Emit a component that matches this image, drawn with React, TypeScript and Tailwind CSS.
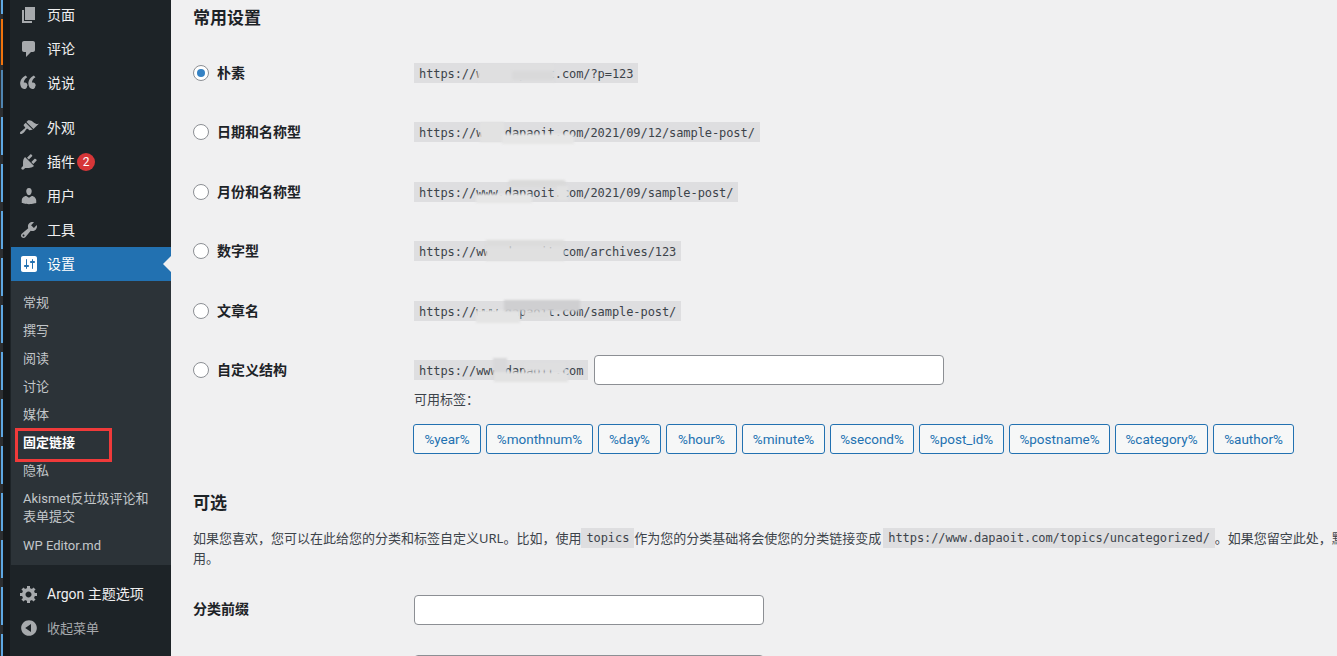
const font = "font-['Noto_Sans','Noto_Sans_CJK_SC',sans-serif]";
const latin = "font-['Roboto','Noto_Sans_CJK_SC',sans-serif]";
const mono = "font-['DejaVu_Sans_Mono','Noto_Sans_CJK_SC',monospace] text-[12px] tracking-[-0.08px]";

const strip = [
  "h-[14px] bg-[#5ea7e2]",
  "h-[5px] bg-[#2c2e30]",
  "h-[46px] bg-[#f0730c]",
  "h-[5px] bg-[#2c2e30]",
  "h-[38px] bg-[#4f84b0]",
  "h-[9px] bg-[#2c2e30]",
  "h-[38px] bg-[#5ea7e2]",
  "h-[9px] bg-[#2c2e30]",
  "h-[38px] bg-[#5ea7e2]",
  "h-[9px] bg-[#2c2e30]",
  "h-[38px] bg-[#5ea7e2]",
  "h-[9px] bg-[#2c2e30]",
  "h-[38px] bg-[#5ea7e2]",
  "h-[9px] bg-[#2c2e30]",
  "h-[38px] bg-[#5ea7e2]",
  "h-[9px] bg-[#2c2e30]",
  "h-[38px] bg-[#5ea7e2]",
  "h-[9px] bg-[#2c2e30]",
  "h-[38px] bg-[#5ea7e2]",
  "h-[9px] bg-[#2c2e30]",
  "h-[38px] bg-[#5ea7e2]",
  "h-[9px] bg-[#2c2e30]",
  "h-[38px] bg-[#5ea7e2]",
  "h-[9px] bg-[#2c2e30]",
  "h-[38px] bg-[#5ea7e2]",
  "h-[9px] bg-[#2c2e30]",
  "h-[38px] bg-[#5ea7e2]",
  "h-[9px] bg-[#2c2e30]",
  "h-[38px] bg-[#5ea7e2]",
  "h-[5px] bg-[#2c2e30]",
  "h-[18px] bg-[#5ea7e2]",
  "h-[8px] bg-[#2c2e30]",
];

// dashicons, 20x20 grid
const icons = {
  page: "M6 15V2h10v13H6zm-1 1h8v2H3V5h2v11z",
  comment: "M5 2h9c1.1 0 2 .9 2 2v7c0 1.1-.9 2-2 2h-2l-5 5v-5H5c-1.1 0-2-.9-2-2V4c0-1.1.9-2 2-2z",
  quote: "M8.54 12.74c0-.87-.24-1.61-.72-2.22-.73-.92-2.14-1.03-2.96-.85-.34-1.93 1.3-4.39 3.42-5.45L6.65 2.5C3.45 4.03.71 7.59 1.27 11.6 1.65 14.37 3.1 16 5.08 16c.88 0 1.61-.29 2.19-.86.58-.58.87-1.32.87-2.2zm8.19 0c0-.87-.24-1.61-.72-2.22-.73-.92-2.14-1.03-2.96-.85-.34-1.93 1.3-4.39 3.42-5.45L14.84 2.5c-3.2 1.53-5.94 5.09-5.38 9.1.38 2.77 1.83 4.4 3.81 4.4.88 0 1.61-.29 2.19-.86.58-.58.87-1.32.87-2.2z",
  brush: "M14.48 11.06L7.41 3.99l1.5-1.5c.5-.56 2.3-.47 3.51.32 1.21.8 1.43 1.28 2.91 2.1 1.18.64 2.45 1.26 4.45.85zm-.71.71L6.7 4.7 4.93 6.47c-.39.39-.39 1.02 0 1.41l1.06 1.06c.39.39.39 1.03 0 1.42-.6.6-1.43 1.11-2.21 1.69-.35.26-.7.53-1.01.84C1.43 13.23.4 14.96 1.2 15.8c.8.8 2.52-.22 3.87-1.57.31-.31.58-.66.84-1.01.58-.78 1.09-1.61 1.69-2.21.39-.39 1.03-.39 1.42 0l1.06 1.06c.39.39 1.02.39 1.41 0z",
  plug: "M13.11 4.36L9.87 7.6 8 5.73l3.24-3.24c.35-.34 1.05-.2 1.56.32.52.51.66 1.21.31 1.55zm-8 1.77l.91-1.12 9.01 9.01-1.19.84c-.71.71-2.63 1.16-3.82 1.16H6.14L4.9 17.26c-.59.59-1.54.59-2.12 0-.59-.58-.59-1.53 0-2.12l1.24-1.24v-3.88c0-1.13.4-3.19 1.09-3.89zm7.26 3.97l3.24-3.24c.34-.35 1.04-.21 1.55.31.52.51.66 1.21.31 1.55l-3.24 3.25z",
  user: "M10 9.25c-2.27 0-2.73-3.44-2.73-3.44C7 4.02 7.82 2 9.97 2c2.16 0 2.98 2.02 2.71 3.81 0 0-.41 3.44-2.68 3.44zm0 2.57L12.72 10c2.39 0 4.52 2.33 4.52 4.53v2.49s-3.65 1.13-7.24 1.13c-3.65 0-7.24-1.13-7.24-1.13v-2.49c0-2.25 1.94-4.48 4.47-4.48z",
  tool: "M16.68 9.77c-1.34 1.34-3.3 1.67-4.95.99l-5.41 6.52c-.99.99-2.59.99-3.58 0s-.99-2.59 0-3.57l6.52-5.42c-.68-1.65-.35-3.61.99-4.95 1.28-1.28 3.12-1.62 4.72-1.06l-2.89 2.89 2.82 2.82 2.86-2.87c.53 1.58.18 3.39-1.08 4.65zM3.81 16.21c.4.39 1.04.39 1.43 0 .4-.4.4-1.04 0-1.43-.39-.4-1.03-.4-1.43 0-.39.39-.39 1.03 0 1.43z",
  settings: "M18 16V4c0-1.1-.9-2-2-2H4c-1.1 0-2 .9-2 2v12c0 1.1.9 2 2 2h12c1.1 0 2-.9 2-2zM8 11h1c.55 0 1 .45 1 1s-.45 1-1 1H8v1.5c0 .28-.22.5-.5.5s-.5-.22-.5-.5V13H6c-.55 0-1-.45-1-1s.45-1 1-1h1V5.5c0-.28.22-.5.5-.5s.5.22.5.5V11zm5-2h-1c-.55 0-1-.45-1-1s.45-1 1-1h1V5.5c0-.28.22-.5.5-.5s.5.22.5.5V7h1c.55 0 1 .45 1 1s-.45 1-1 1h-1v5.5c0 .28-.22.5-.5.5s-.5-.22-.5-.5V9z",
  gear: "M18 12h-2.18c-.17.7-.44 1.35-.81 1.93l1.54 1.54-2.1 2.1-1.54-1.54c-.58.36-1.23.63-1.91.79V19H8v-2.18c-.68-.16-1.33-.43-1.91-.79l-1.54 1.54-2.12-2.12 1.54-1.54c-.36-.58-.63-1.23-.79-1.91H1V9.03h2.17c.16-.7.44-1.35.8-1.94L2.43 5.55l2.1-2.1 1.54 1.54c.58-.37 1.24-.64 1.93-.81V2h3v2.18c.68.16 1.33.43 1.91.79l1.54-1.54 2.12 2.12-1.54 1.54c.36.59.64 1.24.8 1.94H18V12zm-8.5 1.5c1.66 0 3-1.34 3-3s-1.34-3-3-3-3 1.34-3 3 1.34 3 3 3z",
  collapse: "M10 2.16c4.33 0 7.84 3.51 7.84 7.84s-3.51 7.84-7.84 7.84S2.16 14.33 2.16 10 5.71 2.16 10 2.16zm2 11.72V6.12L6.18 9.97z",
};

function Icon({ d, white }: { d: string; white?: boolean }) {
  return (
    <span className="flex w-[36px] shrink-0 justify-center">
      <svg viewBox="0 0 20 20" className={`h-[20px] w-[20px] ${white ? "fill-white" : "fill-[#a7aaad]"}`}>
        <path d={d} />
      </svg>
    </span>
  );
}

function MenuItem({ d, label, badge }: { d: string; label: string; badge?: string }) {
  return (
    <div className={`flex h-[34px] items-center text-[14px] leading-[18px] text-[#f0f0f1] ${latin}`}>
      <Icon d={d} />
      <span>{label}</span>
      {badge && (
        <span className="ml-[2px] flex h-[18px] w-[18px] items-center justify-center rounded-full bg-[#d63638] text-[12px] leading-none text-white">
          {badge}
        </span>
      )}
    </div>
  );
}

const subItems = ["常规", "撰写", "阅读", "讨论", "媒体"];

function SubItem({ label, current }: { label: string; current?: boolean }) {
  return (
    <div className={`flex h-[28px] items-center pl-[12px] text-[13px] leading-[18px] ${latin} ${current ? "font-bold text-white" : "text-[#c3c7ca]"}`}>
      {label}
    </div>
  );
}

function Sidebar() {
  return (
    <div className="relative flex h-[656px] shrink-0">
      <div className="flex w-[3px] flex-col overflow-hidden border-l border-[#2c2e30]">
        {strip.map((c, i) => (
          <div key={i} className={`shrink-0 ${c}`} />
        ))}
      </div>
      <div className="w-[7px] bg-[#15181a]" />
      <div className="w-[1px] bg-[#1d2327]" />
      <div className="w-[160px] bg-[#1d2327]">
        <div className="-mt-[2px]">
          <MenuItem d={icons.page} label="页面" />
          <MenuItem d={icons.comment} label="评论" />
          <MenuItem d={icons.quote} label="说说" />
          <div className="h-[11px]" />
          <MenuItem d={icons.brush} label="外观" />
          <MenuItem d={icons.plug} label="插件" badge="2" />
          <MenuItem d={icons.user} label="用户" />
          <MenuItem d={icons.tool} label="工具" />
          <div className="relative flex h-[34px] items-center bg-[#2271b1] text-[14px] leading-[18px] text-white">
            <Icon d={icons.settings} white />
            <span>设置</span>
            <span className="absolute right-0 top-[9px] h-0 w-0 border-y-[8px] border-r-[8px] border-y-transparent border-r-[#f0f0f1]" />
          </div>
          <div className="bg-[#2c3338] pb-[5px] pt-[8px]">
            {subItems.map((s) => (
              <SubItem key={s} label={s} />
            ))}
            <SubItem label="固定链接" current />
            <SubItem label="隐私" />
            <div className={`px-[12px] pb-[6px] pt-[5px] text-[13px] leading-[18px] text-[#c3c7ca] ${latin}`}>Akismet反垃圾评论和表单提交</div>
            <SubItem label="WP Editor.md" />
          </div>
          <div className="h-[12px]" />
          <MenuItem d={icons.gear} label="Argon 主题选项" />
          <div className="flex h-[34px] items-center text-[13px] leading-[18px] text-[#a7aaad]">
            <Icon d={icons.collapse} />
            <span>收起菜单</span>
          </div>
        </div>
      </div>
      {/* red annotation from the screenshot */}
      <div className="absolute left-[15px] top-[428px] h-[34px] w-[97px] border-[3px] border-[#f03a3a]" />
    </div>
  );
}

function Radio({ checked }: { checked?: boolean }) {
  return (
    <span className="flex h-[16px] w-[16px] shrink-0 items-center justify-center rounded-full border border-[#8c8f94] bg-white">
      {checked && <span className="h-[8px] w-[8px] rounded-full bg-[#3582c4]" />}
    </span>
  );
}

function Code({ text, blobs, inText }: { text: string; blobs?: string[]; inText?: boolean }) {
  return (
    <code className={`relative inline-block h-[20px] bg-[#dedee0] px-[5px] align-top text-[#3c434a] ${inText ? "leading-[20px]" : "leading-[22px]"} ${mono}`}>
      {text}
      {blobs?.map((b, i) => (
        <span key={i} className={`absolute ${b}`} />
      ))}
    </code>
  );
}

const radios = [
  {
    label: "朴素",
    url: "https://www.dapaoit.com/?p=123",
    checked: true,
    blobs: ["left-[64px] top-[1px] h-[18px] w-[76px] bg-[#dfdfe0] blur-[1px]", "left-[98px] top-[8px] h-[9px] w-[42px] bg-[#d9d9da] blur-[1px]"],
  },
  {
    label: "日期和名称型",
    url: "https://www.dapaoit.com/2021/09/12/sample-post/",
    blobs: ["left-[66px] top-[0px] h-[20px] w-[24px] bg-[#e2e2e2] blur-[1px]", "left-[88px] top-[12px] h-[10px] w-[72px] bg-[#e6e6e6] blur-[1px]"],
  },
  {
    label: "月份和名称型",
    url: "https://www.dapaoit.com/2021/09/sample-post/",
    blobs: ["left-[62px] top-[12px] h-[9px] w-[56px] bg-[#e6e6e6] blur-[1px]", "left-[94px] -top-[2px] h-[7px] w-[58px] rounded-[4px] bg-[#dadada] blur-[1px]", "left-[143px] top-[4px] h-[14px] w-[11px] bg-[#e2e2e2] blur-[1px]"],
  },
  {
    label: "数字型",
    url: "https://www.dapaoit.com/archives/123",
    blobs: ["left-[72px] -top-[1px] h-[7px] w-[78px] bg-[#dcdcdc] blur-[1px]", "left-[72px] top-[6px] h-[14px] w-[78px] bg-[#e0e0e0] blur-[1px]"],
  },
  {
    label: "文章名",
    url: "https://www.dapaoit.com/sample-post/",
    blobs: ["left-[62px] top-[9px] h-[13px] w-[44px] bg-[#e4e4e4] blur-[1px]", "left-[90px] -top-[1px] h-[11px] w-[76px] bg-[#cfcfd1] blur-[1px]", "left-[110px] top-[10px] h-[8px] w-[26px] bg-[#dcdcdc] blur-[1px]"],
  },
];

const tags = [
  { t: "%year%", w: "w-[68px]" },
  { t: "%monthnum%", w: "w-[107px]" },
  { t: "%day%", w: "w-[63px]" },
  { t: "%hour%", w: "w-[71px]" },
  { t: "%minute%", w: "w-[83px]" },
  { t: "%second%", w: "w-[84px]" },
  { t: "%post_id%", w: "w-[85px]" },
  { t: "%postname%", w: "w-[101px]" },
  { t: "%category%", w: "w-[93px]" },
  { t: "%author%", w: "w-[81px]" },
];

function TextInput({ w }: { w: string }) {
  return <div className={`h-[30px] ${w} rounded-[4px] border border-[#8c8f94] bg-white`} />;
}

function Main() {
  return (
    <div className="min-w-0 flex-1 overflow-hidden pl-[22px] text-[#3c434a]">
      <h2 className="mt-[8px] h-[20px] text-[17px] font-bold leading-[20px] text-[#1d2327]">常用设置</h2>
      <div className="mt-[15px]">
        {radios.map((r) => (
          <div key={r.label} className="flex h-[59.5px] items-center">
            <div className="flex w-[221px] shrink-0 items-center gap-[8px]">
              <Radio checked={r.checked} />
              <span className="text-[14px] font-bold leading-[20px] text-[#1d2327]">{r.label}</span>
            </div>
            <Code text={r.url} blobs={r.blobs} />
          </div>
        ))}
        <div className="flex">
          <div className="flex h-[59.5px] w-[221px] shrink-0 items-center gap-[8px]">
            <Radio />
            <span className="text-[14px] font-bold leading-[20px] text-[#1d2327]">自定义结构</span>
          </div>
          <div className="pt-[14px]">
            <div className="flex items-center gap-[6px]">
              <Code
                text="https://www.dapaoit.com"
                blobs={["left-[79px] -top-[2px] h-[21px] w-[14px] bg-[#d8d8da] blur-[1px]", "left-[80px] top-[12px] h-[10px] w-[74px] bg-[#e2e2e2] blur-[1px]", "left-[110px] top-[3px] h-[8px] w-[42px] bg-[#dfdfe0] blur-[1px]"]}
              />
              <TextInput w="w-[350px]" />
            </div>
            <div className="mt-[4px] h-[20px] text-[13px] leading-[20px]">可用标签：</div>
            <div className="mt-[15px] -ml-[1px] flex gap-[5px] whitespace-nowrap">
              {tags.map((tag) => (
                <span
                  key={tag.t}
                  className={`flex h-[30px] ${tag.w} items-center justify-center rounded-[3px] border border-[#2271b1] bg-[#f6f7f7] pt-[2px] text-[13.5px] leading-none text-[#2271b1] ${latin}`}
                >
                  {tag.t}
                </span>
              ))}
            </div>
          </div>
        </div>
      </div>
      <h2 className="mt-[39px] h-[20px] text-[17px] font-bold leading-[20px] text-[#1d2327]">可选</h2>
      <p className="mt-[15px] whitespace-nowrap text-[13px] leading-[20px]">
        如果您喜欢，您可以在此给您的分类和标签自定义URL。比如，使用
        <Code text="topics" inText />
        作为您的分类基础将会使您的分类链接变成
        <span className="ml-[2px]">
          <Code text="https://www.dapaoit.com/topics/uncategorized/" inText />
        </span>
        。如果您留空此处，默认值将被使
        <br />
        用。
      </p>
      <div className="mt-[27px] flex items-center">
        <span className="w-[221px] shrink-0 pb-[2px] text-[14px] font-bold leading-[20px] text-[#1d2327]">分类前缀</span>
        <TextInput w="w-[350px]" />
      </div>
      <div className="mt-[30px] flex items-center">
        <span className="w-[221px] shrink-0" />
        <TextInput w="w-[350px]" />
      </div>
    </div>
  );
}

export default function App() {
  return (
    <div className={`flex h-[656px] w-[1337px] overflow-hidden bg-[#f0f0f1] ${font}`}>
      <Sidebar />
      <Main />
    </div>
  );
}
